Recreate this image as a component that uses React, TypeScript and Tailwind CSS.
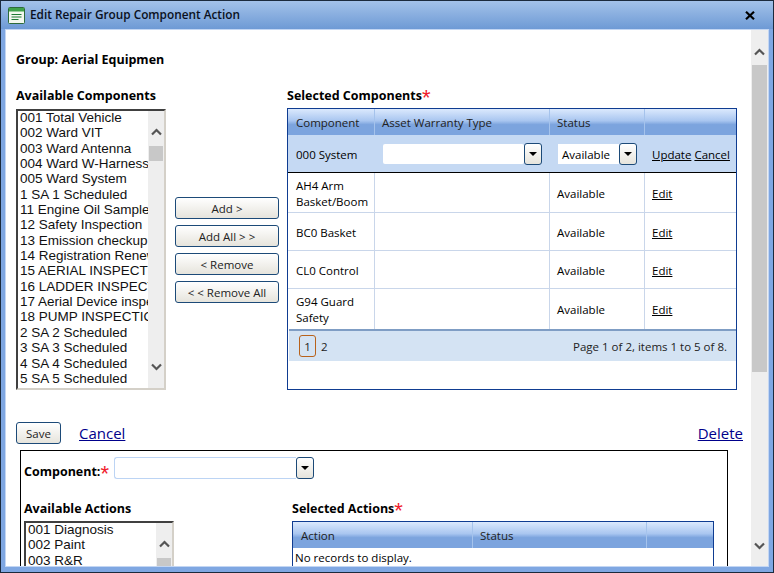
const available = [
  "001 Total Vehicle", "002 Ward VIT", "003 Ward Antenna", "004 Ward W-Harness", "005 Ward System",
  "1 SA 1 Scheduled", "11 Engine Oil Sample", "12 Safety Inspection", "13 Emission checkup",
  "14 Registration Renewal", "15 AERIAL INSPECTION", "16 LADDER INSPECTION", "17 Aerial Device inspection",
  "18 PUMP INSPECTION", "2 SA 2 Scheduled", "3 SA 3 Scheduled", "4 SA 4 Scheduled", "5 SA 5 Scheduled",
];

const rows = [
  { name: "AH4 Arm Basket/Boom", h: "h-[40px]" },
  { name: "BC0 Basket", h: "h-[38px]" },
  { name: "CL0 Control", h: "h-[38px]" },
  { name: "G94 Guard Safety", h: "h-[40px]" },
];

function Chevron({ up, className }: { up?: boolean; className?: string }) {
  return (
    <svg width="11" height="8" viewBox="0 0 11 8" className={className}>
      <path d={up ? "M1 6.5 L5.5 2 L10 6.5" : "M1 1.5 L5.5 6 L10 1.5"} fill="none" stroke="#555" strokeWidth="2.2" />
    </svg>
  );
}

function Req() {
  return <span className="font-['Liberation_Sans',sans-serif] text-[#f0202c] text-[22px] leading-[0] font-normal relative top-[5px]">*</span>;
}

function Heading({ children }: { children: React.ReactNode }) {
  return <div className="font-bold text-[12.5px] leading-[18px] text-black">{children}</div>;
}

function ListBox({ items, className }: { items: string[]; className?: string }) {
  return (
    <div className={`w-[150px] flex border-2 border-t-[#404040] border-l-[#404040] border-r-[#d4d0c8] border-b-[#d4d0c8] bg-white overflow-hidden ${className}`}>
      <div className="w-[130px] -mt-[1px] overflow-hidden font-['Liberation_Sans',sans-serif] text-[13.5px] leading-[15.35px] text-[#111] whitespace-nowrap pl-[2px]">
        {items.map((s) => <div key={s}>{s}</div>)}
      </div>
      <div className="w-[16px] bg-[#eeeeee] flex flex-col items-center">
        <Chevron up className="mt-[17px]" />
        <div className="w-[14px] h-[15px] bg-[#c8c8c8] mt-[10px]" />
        <div className="flex-1" />
        <Chevron className="mb-[17px]" />
      </div>
    </div>
  );
}

function ActionButton({ label, className }: { label: string; className?: string }) {
  return (
    <button className={`h-[22px] pt-[1px] border border-[#1c4a78] rounded-[3px] bg-gradient-to-b from-white to-[#e6e4dc] text-[11.5px] leading-none text-[#222] ${className}`}>
      {label}
    </button>
  );
}

function DropButton() {
  return (
    <div className="w-[18px] h-[22px] flex items-center justify-center border border-[#1c4a78] rounded-[3px] bg-gradient-to-b from-white to-[#e6e4dc]">
      <svg width="8" height="4" viewBox="0 0 8 4"><path d="M0 0 H8 L4 4 Z" fill="#000" /></svg>
    </div>
  );
}

function HeaderCell({ label, className }: { label?: string; className?: string }) {
  return (
    <div className={`h-full pt-[2px] flex items-center border-r border-[#a5c3ec] text-[#222] ${className}`}>
      {label}
    </div>
  );
}

const headerBg = "bg-[linear-gradient(to_bottom,#dbe9fd_0%,#a9c6f0_45%,#7ca4de_60%,#7ca4de_100%)]";

export default function App() {
  return (
    <div className="w-[774px] h-[573px] flex flex-col overflow-hidden border border-[#1b2a3c] bg-[#7fa7e2] font-['Open_Sans',sans-serif] text-[11.5px] text-black">
      {/* Title bar */}
      <div className="h-[28px] shrink-0 flex items-center pl-[7px] pr-[18px] bg-gradient-to-b from-[#a3c2e9] to-[#6e9ad5]">
        <svg width="17" height="17" viewBox="0 0 17 17">
          <rect x="0.5" y="0.5" width="16" height="16" rx="1" fill="#f2f8ee" stroke="#2d6b3a" />
          <rect x="1" y="1" width="15" height="3.5" fill="#3fa24a" />
          <path d="M3.5 7.5 H13.5 M3.5 10 H13.5 M3.5 12.5 H10.5" stroke="#1f7a35" strokeWidth="1.2" />
        </svg>
        <div className="ml-[5px] flex-1 font-semibold text-[11.8px] text-[#0a1020]">Edit Repair Group Component Action</div>
        <svg width="10" height="9" viewBox="0 0 10 9">
          <path d="M1 0.8 L9 8.2 M9 0.8 L1 8.2" stroke="#000" strokeWidth="2.2" />
        </svg>
      </div>

      {/* Window body */}
      <div className="flex-1 min-h-0 flex mx-[4px] mb-[5px] border border-[#c3d6f3] bg-white">
        <div className="flex-1 min-w-0 overflow-hidden pl-[10px] pr-[8px]">
          <div className="mt-[21px] font-bold text-[12.5px] leading-[18px]">Group: Aerial Equipmen</div>

          <div className="mt-[17px] flex">
            <div className="w-[150px]">
              <div className="h-[23px] pt-[1px]"><Heading>Available Components</Heading></div>
              <ListBox items={available} className="h-[281px]" />
            </div>

            <div className="ml-[9px] w-[104px] mt-[111px] flex flex-col gap-[6px]">
              {["Add >", "Add All > >", "< Remove", "< < Remove All"].map((b) => (
                <ActionButton key={b} label={b} />
              ))}
            </div>

            <div className="ml-[8px] w-[450px]">
              <div className="h-[22px] pt-[1px]"><Heading>Selected Components<Req /></Heading></div>
              <div className="h-[282px] border border-[#0f3c91]">
                <div className={`h-[26px] flex ${headerBg}`}>
                  <HeaderCell label="Component" className="w-[87px] pl-[8px]" />
                  <HeaderCell label="Asset Warranty Type" className="w-[175px] pl-[7px]" />
                  <HeaderCell label="Status" className="w-[95px] pl-[7px]" />
                </div>

                <div className="h-[38px] flex items-center bg-[#c5d9f3] border-b border-black">
                  <div className="w-[87px] pl-[8px] pt-[2px]">000 System</div>
                  <div className="w-[175px] pl-[8px] flex">
                    <div className="w-[141px] h-[20px] mt-[1px] bg-white rounded-[2px]" />
                    <DropButton />
                  </div>
                  <div className="w-[95px] pl-[8px] flex">
                    <div className="w-[61px] h-[20px] mt-[1px] bg-white pl-[4px] leading-[21px]">Available</div>
                    <DropButton />
                  </div>
                  <div className="pl-[7px] pt-[2px] flex gap-[3px] underline">
                    <span>Update</span>
                    <span>Cancel</span>
                  </div>
                </div>

                {rows.map((r, i) => (
                  <div key={r.name} className={`${r.h} flex ${i < rows.length - 1 ? "border-b border-[#c9d6ea]" : ""}`}>
                    <div className="w-[87px] pl-[8px] pr-[4px] pt-[2px] flex items-center border-r border-[#c9d6ea] leading-[16px]">{r.name}</div>
                    <div className="w-[175px] border-r border-[#c9d6ea]" />
                    <div className="w-[95px] pl-[7px] pt-[2px] flex items-center border-r border-[#c9d6ea]">Available</div>
                    <div className="pl-[7px] pt-[2px] flex items-center underline">Edit</div>
                  </div>
                ))}

                <div className="h-[32px] ml-[1px] flex items-center bg-[#d4e3f3] border-t-2 border-[#7f9dc4] text-[#222] pl-[10px] pr-[9px]">
                  <span className="w-[17px] h-[22px] pt-[1px] flex items-center justify-center border border-[#b8621b] rounded-[3px]">1</span>
                  <span className="ml-[5px] pt-[1px]">2</span>
                  <span className="ml-auto pt-[1px]">Page 1 of 2, items 1 to 5 of 8.</span>
                </div>
              </div>
            </div>
          </div>

          <div className="mt-[32px] h-[22px] flex items-center">
            <ActionButton label="Save" className="w-[45px]" />
            <a className="ml-[18px] text-[15px] leading-none underline text-[#00008b]">Cancel</a>
            <a className="ml-auto text-[15px] leading-none underline text-[#00008b]">Delete</a>
          </div>

          <div className="mt-[6px] ml-[4px] w-[708px] h-[200px] border border-black pl-[3px] pt-[6px]">
            <div className="flex h-[22px]">
              <div className="w-[90px] mt-[6px] font-bold text-[12.5px] leading-[18px] h-[18px] whitespace-nowrap">Component:<Req /></div>
              <div className="w-[182px] h-[22px] border border-[#bcd4f4] border-r-0 rounded-l-[3px] bg-white" />
              <DropButton />
            </div>

            <div className="mt-[20px] flex">
              <div className="w-[150px]">
                <div className="h-[22px] pt-[1px]"><Heading>Available Actions</Heading></div>
                <ListBox items={["001 Diagnosis", "002 Paint", "003 R&R", "004 Repair", "005 Service"]} className="h-[100px]" />
              </div>
              <div className="ml-[118px] w-[422px]">
                <div className="h-[22px] pt-[1px]"><Heading>Selected Actions<Req /></Heading></div>
                <div className="border border-[#0f3c91] h-[100px]">
                  <div className={`h-[26px] flex ${headerBg}`}>
                    <HeaderCell label="Action" className="w-[180px] pl-[8px]" />
                    <HeaderCell label="Status" className="w-[174px] pl-[7px]" />
                  </div>
                  <div className="pl-[2px] pt-[2px] leading-[16px]">No records to display.</div>
                </div>
              </div>
            </div>
          </div>
        </div>

        {/* Page scrollbar */}
        <div className="w-[17px] shrink-0 bg-[#eeeeee] flex flex-col items-center">
          <Chevron up className="mt-[18px]" />
          <div className="w-[15px] h-[307px] mt-[9px] bg-[#c8c8c8]" />
          <div className="flex-1" />
          <Chevron className="mb-[16px]" />
        </div>
      </div>
    </div>
  );
}
